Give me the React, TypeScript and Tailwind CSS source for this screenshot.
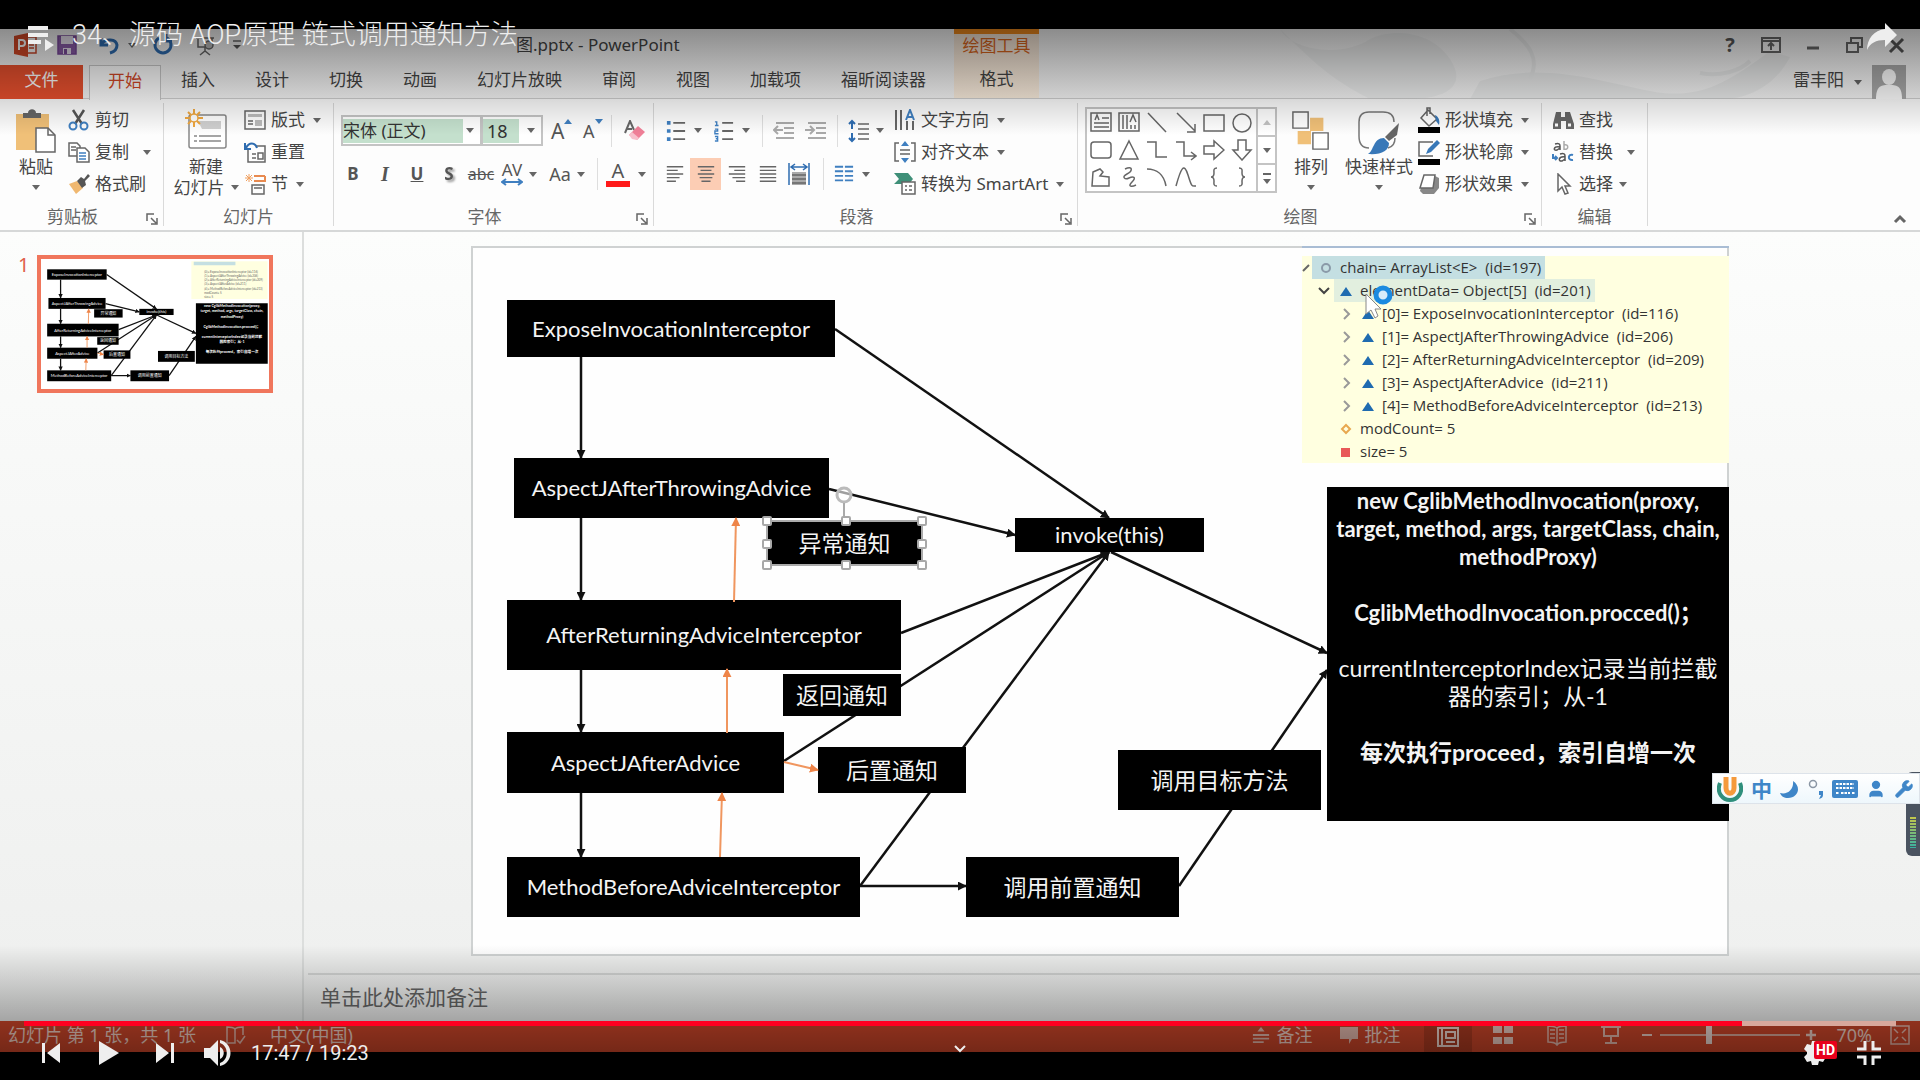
import type { ReactNode } from "react";
import { Wrench, User } from "lucide-react";

/* ── Small helpers ─────────────────────────────────────────── */

function Caret({ className = "" }: { className?: string }) {
  return (
    <svg viewBox="0 0 8 5" className={`h-[5px] w-2 shrink-0 ${className}`} aria-hidden>
      <path d="M0 0h8L4 5z" fill="#666" />
    </svg>
  );
}

function Icon({ children, box = "0 0 22 22", className = "h-[22px] w-[22px]" }: { children: ReactNode; box?: string; className?: string }) {
  return (
    <svg viewBox={box} className={`shrink-0 ${className}`} fill="none" stroke="#666" strokeWidth="1.5" aria-hidden>
      {children}
    </svg>
  );
}

/* ── Title bar and tabs ────────────────────────────────────── */

const TABS = ["插入", "设计", "切换", "动画", "幻灯片放映", "审阅", "视图", "加载项", "福昕阅读器"];

function QuickAccess() {
  return (
    <div className="flex h-9 items-center pl-3.5 pb-1">
      <Icon box="0 0 24 24" className="h-6 w-6">
        <path d="M13 4h9v16h-9" fill="#fff" stroke="#c8452a" />
        <path d="M15 9h5M15 12h5M15 15h5" stroke="#c8452a" />
        <path d="M0 3l14-3v24L0 21z" fill="#d24726" stroke="none" />
        <path d="M5 17V7h3a3 3 0 010 6H5" stroke="#fff" strokeWidth="2" />
      </Icon>
      <button aria-label="保存" className="ml-[18px]">
        <Icon>
          <path d="M2 2h18v18H2z" fill="#8a5ba8" stroke="#7a4a9a" />
          <path d="M5 2h12v8H5zM7 14h8v6H7z" fill="#e8e0ee" stroke="none" />
          <path d="M8 15h3v5H8z" fill="#7a4a9a" stroke="none" />
        </Icon>
      </button>
      <button aria-label="撤消" className="ml-5 flex items-center gap-2">
        <Icon>
          <path d="M3 4v7h7M3 10c5-6 15-5 16 1 0 4-3 7-7 8" stroke="#2e6cb0" strokeWidth="3" />
        </Icon>
        <Caret />
      </button>
      <button aria-label="重复" className="ml-4">
        <Icon>
          <path d="M15 4a8 8 0 11-8 0M14 0v7h6" stroke="#2e6cb0" strokeWidth="3" />
        </Icon>
      </button>
      <button aria-label="从头开始" className="ml-5">
        <Icon>
          <path d="M2 4h18M4 4v9h14V4M11 13v4M6 21l5-4 5 4" />
          <circle cx="15" cy="11" r="4" fill="#bbb" />
        </Icon>
      </button>
      <button aria-label="自定义快速访问工具栏" className="ml-4">
        <Icon box="0 0 10 10" className="h-2.5 w-2.5">
          <path d="M1 1h8" />
          <path d="M1 5h8L5 9z" fill="#555" stroke="none" />
        </Icon>
      </button>
      <h1 className="ml-[274px] text-[17px] leading-6 text-[#444]">图.pptx - PowerPoint</h1>
    </div>
  );
}

function WindowButtons() {
  return (
    <div className="flex h-9 items-center justify-end gap-5 pb-1 pr-3">
      <button aria-label="帮助" className="w-5 text-xl font-bold text-[#555]">?</button>
      <button aria-label="功能区显示选项">
        <Icon>
          <path d="M2 4h18v14H2zM2 7h18M11 16V9M8 12l3-3 3 3" strokeWidth="2" />
        </Icon>
      </button>
      <button aria-label="最小化">
        <Icon>
          <path d="M5 14h12" strokeWidth="3" />
        </Icon>
      </button>
      <button aria-label="还原">
        <Icon>
          <path d="M3 9h11v9H3zM7 9V4h11v9h-4" strokeWidth="2" />
        </Icon>
      </button>
      <button aria-label="关闭">
        <Icon>
          <path d="M4 5l13 13M17 5L4 18" stroke="#555" strokeWidth="3" />
        </Icon>
      </button>
    </div>
  );
}

function Header() {
  return (
    <header className="relative flex h-[70px] shrink-0 border-b border-[#d0d0d0] bg-[#f6f6f6]">
      <svg viewBox="0 0 700 70" className="absolute right-0 top-0 h-[70px] w-[700px] opacity-15" aria-hidden>
        <path d="M60 0c10 20 60 30 90 10 20-10 60-10 80 20s-10 40-40 40H150C110 50 90 30 60 0z" fill="#c0c6c6" />
        <path d="M260 52c60-20 120 0 170 10s80-10 120-40l20 6c-10 20-30 38-60 42H250z" fill="#b8bebe" />
        <path d="M290 0c20 16 30 30 20 50M480 44c20 4 40-2 50-12" fill="none" stroke="#b0b6b6" strokeWidth="4" />
      </svg>
      <div className="relative w-[954px] shrink-0">
        <QuickAccess />
        <nav className="flex h-[34px] items-stretch whitespace-nowrap text-[17px] leading-[30px] text-[#444]">
          <button className="mr-1.5 w-[83px] bg-[#e8502e] pb-1 text-white">文件</button>
          <button className="-mb-px w-[72px] border border-b-0 border-[#c8c8c8] bg-[#fdfdfd] pb-1 text-[#d24726]">开始</button>
          {TABS.map((t) => (
            <button key={t} className="px-5 pb-1">
              {t}
            </button>
          ))}
        </nav>
      </div>
      <div className="relative flex w-[85px] shrink-0 flex-col items-center border-t-5 border-[#f08a1c] bg-gradient-to-b from-[#f6e6d6] to-[#fbeede] text-[17px]">
        <span className="h-[31px] leading-6 text-[#d8651c]">绘图工具</span>
        <button className="flex-1 pb-1 leading-[30px] text-[#444]">格式</button>
      </div>
      <div className="relative flex-1">
        <WindowButtons />
        <div className="flex h-[34px] items-center justify-end gap-2.5 pr-3.5 text-[17px] leading-[30px] text-[#444]">
          <span className="pb-1">雷丰阳</span>
          <Caret />
          <Icon box="0 0 34 34" className="h-[34px] w-[34px]">
            <path d="M0 0h34v34H0z" fill="#a8a8a8" stroke="none" />
            <ellipse cx="17" cy="12" rx="7" ry="8" fill="#fff" stroke="none" />
            <path d="M4 34c0-14 6-14 13-14s13 0 13 14z" fill="#fff" stroke="none" />
          </Icon>
        </div>
      </div>
    </header>
  );
}

/* ── Ribbon ────────────────────────────────────────────────── */

function Group({ label, launcher, width, children }: { label: string; launcher?: boolean; width: string; children: ReactNode }) {
  return (
    <section className={`my-1 flex shrink-0 flex-col border-r border-[#dadada] pt-px ${width}`}>
      <div className="flex h-24">{children}</div>
      <div className="flex flex-1 items-center pt-2 text-[17px] leading-4 text-[#666]">
        <span className="flex-1 text-center">{label}</span>
        {launcher && (
          <button aria-label={`${label}设置`} className="mr-1 pt-1">
            <Icon box="0 0 14 14" className="h-3.5 w-3.5">
              <path d="M2 9V2h7M6 6l5 5M12 6v6H6" />
            </Icon>
          </button>
        )}
      </div>
    </section>
  );
}

function TallButton({ icon, top, bottom, width }: { icon: ReactNode; top: string; bottom?: string; width: string }) {
  return (
    <button className={`flex shrink-0 flex-col items-center text-[17px] leading-[21px] text-[#444] ${width}`}>
      <span className="flex h-[52px] items-start pt-1">{icon}</span>
      <span className="whitespace-nowrap">{top}</span>
      <span className="flex h-[21px] items-center gap-1.5 whitespace-nowrap">
        {bottom}
        <Caret />
      </span>
    </button>
  );
}

function RowButton({ icon, label, caret, gap = "gap-2" }: { icon: ReactNode; label: string; caret?: boolean; gap?: string }) {
  return (
    <button className={`flex h-8 items-center whitespace-nowrap text-[17px] text-[#444] ${gap}`}>
      <span className="flex items-center gap-[5px]">
        {icon}
        {label}
      </span>
      {caret && <Caret />}
    </button>
  );
}

function Sep() {
  return <span className="h-8 w-px shrink-0 bg-[#dedede]" />;
}

function ClipboardGroup() {
  return (
    <Group label="剪贴板" launcher width="w-[164px]">
      <TallButton
        width="ml-1 w-16"
        top="粘贴"
        icon={
          <Icon box="0 0 42 46" className="h-[46px] w-[42px]">
            <path d="M1 6h33v36H1z" fill="#f0c078" stroke="none" />
            <path d="M8 10V5h5c0-5 8-5 8 0h5v5z" fill="#666" stroke="none" />
            <path d="M21 20h12l7 7v17H21z" fill="#fff" />
            <path d="M33 20v7h7" />
          </Icon>
        }
      />
      <div className="flex flex-col">
        <RowButton
          label="剪切"
          icon={
            <Icon>
              <path d="M5 1l9 14M16 1L7 15" stroke="#555" strokeWidth="2.5" />
              <circle cx="5" cy="17" r="3.5" stroke="#3f7fc0" strokeWidth="2" />
              <circle cx="16" cy="17" r="3.5" stroke="#3f7fc0" strokeWidth="2" />
            </Icon>
          }
        />
        <RowButton
          label="复制"
          caret
          gap="gap-3.5"
          icon={
            <Icon>
              <path d="M1 2h8l3 3v10H1zM3 6h5M3 9h5" />
              <path d="M9 7h8l4 4v10H9z" fill="#fff" />
              <path d="M11 12h7M11 15h7M11 18h7" stroke="#3f7fc0" />
            </Icon>
          }
        />
        <RowButton
          label="格式刷"
          icon={
            <Icon>
              <path d="M1 11l8-3 6 7-7 6z" fill="#f0b870" stroke="none" />
              <path d="M9 8l4-4 3 2 4-5 2 2-5 5 1 4-4 3z" fill="#555" stroke="none" />
            </Icon>
          }
        />
      </div>
    </Group>
  );
}

function SlidesGroup() {
  return (
    <Group label="幻灯片" width="w-[170px]">
      <TallButton
        width="ml-1 w-[76px]"
        top="新建"
        bottom="幻灯片"
        icon={
          <Icon box="0 0 44 44" className="h-11 w-11">
            <rect x="5" y="7" width="37" height="33" rx="2" fill="#fff" stroke="#888" />
            <path d="M14 13h23v8H18z" fill="#d0d0d0" stroke="none" />
            <path d="M10 28h27M10 33h27" stroke="#888" strokeDasharray="3 2 30" />
            <path d="M10 1v18M1 10h18M4 4l12 12M16 4L4 16" stroke="#f0a840" strokeWidth="2" />
            <circle cx="10" cy="10" r="4" fill="#fff" stroke="#f0a840" />
          </Icon>
        }
      />
      <div className="flex flex-col">
        <RowButton
          label="版式"
          caret
          icon={
            <Icon>
              <path d="M1 2h20v18H1z" />
              <path d="M4 5h14v3H4zM11 11h7v6h-7z" fill="#bbb" stroke="none" />
              <path d="M4 12h5M4 15h5" />
            </Icon>
          }
        />
        <RowButton
          label="重置"
          icon={
            <Icon>
              <path d="M4 8v13h17V5H12M8 13h4M8 17h4M14 12h5v6h-5z" />
              <path d="M1 2v6h6M2 7c3-6 9-6 11 0" stroke="#2e6cb0" strokeWidth="2" />
            </Icon>
          }
        />
        <RowButton
          label="节"
          caret
          icon={
            <Icon>
              <path d="M5 1v8M1 5h8M2 2l6 6M8 2L2 8" stroke="#f0a060" strokeWidth="1" />
              <path d="M10 3h11M10 8h11v-5" stroke="#e88a50" strokeWidth="2" />
              <path d="M8 12h12v9H8zM10 15h8" />
            </Icon>
          }
        />
      </div>
    </Group>
  );
}

function FontGroup() {
  return (
    <Group label="字体" launcher width="w-[320px]">
      <div className="flex flex-col gap-3 pl-[7px] pt-[11px] text-[#555]">
        <div className="flex h-[31px] items-center">
          <div className="flex h-[31px] w-[141px] items-center border-2 border-[#c4c4c4] bg-white pr-1.5">
            <select aria-label="字体" className="h-6 w-[120px] appearance-none bg-[#c4e0cd] text-[17px] leading-6 text-[#333]">
              <option>宋体 (正文)</option>
            </select>
            <Caret className="ml-auto" />
          </div>
          <div className="-ml-px flex h-[31px] w-[62px] items-center border-2 border-[#c4c4c4] bg-white pr-1.5">
            <select aria-label="字号" className="h-6 w-9 appearance-none bg-[#c4e0cd] pl-1 text-lg leading-6 text-[#333]">
              <option>18</option>
            </select>
            <Caret className="ml-auto" />
          </div>
          <button aria-label="增大字号" className="ml-2 flex w-8 items-start text-[21px] leading-6">
            A
            <Icon box="0 0 8 5" className="h-[5px] w-2">
              <path d="M0 5h8L4 0z" fill="#3f7fc0" stroke="none" />
            </Icon>
          </button>
          <button aria-label="减小字号" className="flex w-7 items-start text-lg leading-6">
            A
            <Icon box="0 0 8 5" className="h-[5px] w-2">
              <path d="M0 0h8L4 5z" fill="#3f7fc0" stroke="none" />
            </Icon>
          </button>
          <Sep />
          <button aria-label="清除所有格式" className="ml-3">
            <Icon>
              <path d="M1 13L6 1l4 9M3 9h5" strokeWidth="2" />
              <path d="M5 15l9-9 7 6-8 8z" fill="#f08098" stroke="none" />
              <path d="M5 15l3-3 7 6-2 2-5-1z" fill="#f8c0cc" stroke="none" />
            </Icon>
          </button>
        </div>
        <div className="-ml-1 flex h-8 items-center text-[17px]">
          <button className="w-8 font-bold">B</button>
          <button className="w-8 font-['Liberation_Serif',serif] text-xl font-bold italic">I</button>
          <button className="w-8 font-bold underline">U</button>
          <button className="w-8 font-bold drop-shadow-[2px_2px_1px_rgba(0,0,0,0.4)]">S</button>
          <button className="w-8 text-base line-through">abc</button>
          <button aria-label="字符间距" className="flex w-11 items-center justify-center gap-1.5">
            <span className="flex flex-col items-center leading-4">
              AV
              <Icon box="0 0 22 8" className="h-2 w-[22px]">
                <path d="M1 4h20M5 1L1 4l4 3M17 1l4 3-4 3" stroke="#3f7fc0" strokeWidth="2" />
              </Icon>
            </span>
            <Caret />
          </button>
          <button className="ml-1 flex w-11 items-center justify-center gap-1.5 text-lg">
            Aa
            <Caret />
          </button>
          <span className="ml-2 h-8 w-px bg-[#dedede]" />
          <button aria-label="字体颜色" className="ml-2 flex items-center gap-2">
            <span className="w-6 border-b-6 border-[#ff1a1a] text-center text-xl leading-5">A</span>
            <Caret />
          </button>
        </div>
      </div>
    </Group>
  );
}

const ALIGNS = [
  { label: "左对齐", d: "M1 3h18M1 7h12M1 11h18M1 15h14M1 19h10", active: false },
  { label: "居中", d: "M1 3h18M4 7h12M1 11h18M3 15h14M5 19h10", active: true },
  { label: "右对齐", d: "M1 3h18M7 7h12M1 11h18M5 15h14M9 19h10", active: false },
  { label: "两端对齐", d: "M1 3h18M1 7h18M1 11h18M1 15h18M1 19h18", active: false },
];

function ParagraphGroup() {
  return (
    <Group label="段落" launcher width="w-[424px]">
      <div className="flex w-[240px] flex-col gap-3 pt-[11px]">
        <div className="flex h-[31px] items-center pl-3">
          <button aria-label="项目符号" className="flex w-12 items-center gap-2">
            <Icon className="h-[26px] w-5">
              <path d="M8 2h13M8 11h13M8 20h13" strokeWidth="2" />
              <path d="M1 0h4v4H1zM1 9h4v4H1zM1 18h4v4H1z" fill="#3f7fc0" stroke="none" />
            </Icon>
            <Caret />
          </button>
          <button aria-label="编号" className="flex w-12 items-center gap-2">
            <Icon className="h-[26px] w-5">
              <path d="M9 2h12M9 11h12M9 20h12" strokeWidth="2" />
              <path d="M1 1h2v4M1 5h4M1 9h3v2H1v3h4M1 17h3v5H1M2 19.500h2" stroke="#3f7fc0" />
            </Icon>
            <Caret />
          </button>
          <Sep />
          <button aria-label="减少缩进量" className="ml-2.5 w-8">
            <Icon>
              <path d="M3 3h18M11 8h10M11 13h10M3 18h18M10 10H1M5 6l-4 4 4 4" stroke="#aaa" strokeWidth="2" />
            </Icon>
          </button>
          <button aria-label="增加缩进量" className="w-8">
            <Icon>
              <path d="M3 3h18M11 8h10M11 13h10M3 18h18M0 10h9M5 6l4 4-4 4" stroke="#aaa" strokeWidth="2" />
            </Icon>
          </button>
          <Sep />
          <button aria-label="行距" className="ml-2.5 flex items-center gap-1.5">
            <Icon className="h-7 w-[22px]">
              <path d="M10 4h11M10 9h11M10 14h11M10 19h11" />
              <path d="M4 1v8M1 4l3-3 3 3M4 13v8M1 18l3 3 3-3" stroke="#2e6cb0" strokeWidth="2" />
            </Icon>
            <Caret />
          </button>
        </div>
        <div className="flex h-8 items-center pl-[5px]">
          {ALIGNS.map((a) => (
            <button key={a.label} aria-label={a.label} className={`flex h-8 w-[31px] items-center justify-center ${a.active ? "bg-[#fccdb4]" : ""}`}>
              <Icon box="0 0 20 22" className="h-5 w-5">
                <path d={a.d} />
              </Icon>
            </button>
          ))}
          <button aria-label="分散对齐" className="mr-2 flex w-8 justify-center">
            <Icon>
              <path d="M1 0v22M21 0v22M3 4h16M7 1L3 4l4 3M15 1l4 3-4 3" stroke="#2e6cb0" />
              <path d="M4 9h14v13H4z" fill="#aaa" stroke="none" />
              <path d="M4 12h14M4 16h14M4 20h14" />
            </Icon>
          </button>
          <Sep />
          <button aria-label="分栏" className="ml-2.5 flex items-center gap-2">
            <Icon className="h-[22px] w-5">
              <path d="M1 3h9M1 8h9M1 13h9M1 18h9M12 3h9M12 8h9M12 13h9M12 18h9" stroke="#3f7fc0" strokeWidth="2" />
            </Icon>
            <Caret />
          </button>
        </div>
      </div>
      <div className="flex flex-col">
        <RowButton
          label="文字方向"
          caret
          icon={
            <Icon>
              <path d="M2 1v20M7 1v20M13 12v9M19 12v9" strokeWidth="2" />
              <path d="M12 11l4-10 4 10M13 8h6" stroke="#3f7fc0" strokeWidth="2" />
            </Icon>
          }
        />
        <RowButton
          label="对齐文本"
          caret
          icon={
            <Icon>
              <path d="M5 2H1v18h4M17 2h4v18h-4M6 9h10M6 13h10" />
              <path d="M11 0l4 5H7zM11 22l4-5H7z" fill="#3f7fc0" stroke="none" />
            </Icon>
          }
        />
        <RowButton
          label="转换为 SmartArt"
          caret
          icon={
            <Icon>
              <path d="M0 0h14l5 6-4 5H0l5-5z" fill="#3f8f78" stroke="none" />
              <path d="M8 9h13v12H8z" fill="#fff" />
              <path d="M11 13h2M11 17h2M15 13h3M15 17h3" />
            </Icon>
          }
        />
      </div>
    </Group>
  );
}

const SHAPES = [
  "M1 1h20v18H1zM5 8l2-5 2 5M12 6h7M4 11h15M4 15h15",
  "M1 1h20v18H1zM5 3v14M9 3v14M12 10l3-7 3 7M13 13v4M17 13v4",
  "M2 1l18 19",
  "M2 1l18 18M20 12v8h-8",
  "M1 3h20v16H1z",
  "M11 2a9 9 0 110 18 9 9 0 010-18z",
  "M4 3h14a3 3 0 013 3v10a3 3 0 01-3 3H4a3 3 0 01-3-3V6a3 3 0 013-3z",
  "M11 2l9 18H2z",
  "M1 3h9v15h11",
  "M1 3h8v14h11M16 13l5 4-5 4",
  "M1 7h10V2l10 9-10 9v-5H1z",
  "M7 1h8v10h5l-9 10-9-10h5z",
  "M3 6l7-3 3 3-3 4 9 1v9H2z",
  "M7 3c8-4 8 2 2 5s-2 6 2 4 8-1 3 4 0 5 4 3",
  "M1 3c10 0 17 6 19 17",
  "M1 20C6 2 9-4 13 9s4 11 8 11",
  "M14 2c-4 0-3 3-3 5s-1 4-3 4c2 0 3 2 3 4s-1 5 3 5",
  "M8 2c4 0 3 3 3 5s1 4 3 4c-2 0-3 2-3 4s1 5-3 5",
];

function DrawingGroup() {
  return (
    <Group label="绘图" launcher width="w-[464px]">
      <div className="ml-[7px] mt-[3px] flex h-[86px] w-[192px] shrink-0 border-2 border-[#c4c4c4] bg-white">
        <div className="grid flex-1 grid-cols-6">
          {SHAPES.map((d) => (
            <button key={d} aria-label="形状" className="flex items-center justify-center">
              <Icon className="h-[22px] w-[22px]">
                <path d={d} />
              </Icon>
            </button>
          ))}
        </div>
        <div className="flex w-[19px] flex-col divide-y-2 divide-[#c4c4c4] border-l-2 border-[#c4c4c4]">
          <button aria-label="上一行" className="flex flex-1 items-center justify-center">
            <Caret className="rotate-180 opacity-40" />
          </button>
          <button aria-label="下一行" className="flex flex-1 items-center justify-center">
            <Caret />
          </button>
          <button aria-label="其他" className="flex flex-1 flex-col items-center justify-center gap-1">
            <span className="h-0.5 w-2 bg-[#666]" />
            <Caret />
          </button>
        </div>
      </div>
      <TallButton
        width="ml-1 w-[60px]"
        top="排列"
        icon={
          <Icon box="0 0 42 44" className="mt-0.5 h-[42px] w-10">
            <path d="M20 8h14v14H20zM7 22h14v14H7z" fill="#f0c078" stroke="none" />
            <path d="M2 2h16v17H2zM23 24h16v17H23z" fill="#fff" />
          </Icon>
        }
      />
      <TallButton
        width="w-[76px]"
        top="快速样式"
        icon={
          <Icon box="0 0 44 46" className="mt-0.5 h-[46px] w-11">
            <path d="M12 38C4 38 2 32 2 26V12C2 5 6 2 12 2h14c8 0 11 4 11 10" fill="none" stroke="#777" />
            <path d="M38 28c0 6-3 9-7 10" stroke="#777" />
            <path d="M42 13l-2 12-8 6-4-4z" fill="#666" stroke="none" />
            <path d="M27 28l5 5c0 8-8 12-21 11 6-3 5-16 16-16z" fill="#3878b8" stroke="none" />
          </Icon>
        }
      />
      <div className="flex flex-col pl-px">
        <RowButton
          label="形状填充"
          caret
          icon={
            <Icon box="0 0 22 26" className="h-[26px] w-[22px]">
              <path d="M10 3l9 9-8 7-8-8zM9 9V1h3v6" fill="#fff" />
              <path d="M17 8c4 2 5 6 4 10l-3-4z" fill="#3878b8" stroke="none" />
              <path d="M0 20h22v6H0z" fill="#000" stroke="none" />
            </Icon>
          }
        />
        <RowButton
          label="形状轮廓"
          caret
          icon={
            <Icon box="0 0 22 26" className="h-[26px] w-[22px]">
              <path d="M15 3H1v14h14" />
              <path d="M8 15l2-5 9-9 3 3-9 9z" fill="#3878b8" stroke="none" />
              <path d="M0 20h22v6H0z" fill="#000" stroke="none" />
            </Icon>
          }
        />
        <RowButton
          label="形状效果"
          caret
          icon={
            <Icon>
              <path d="M6 3h11l4 2v10l-5 6H5l-3-3z" fill="#888" stroke="none" />
              <path d="M6 2h11l-2 13H2z" fill="#fff" />
            </Icon>
          }
        />
      </div>
    </Group>
  );
}

function EditingGroup() {
  return (
    <Group label="编辑" width="w-[106px]">
      <div className="flex flex-col pl-2.5">
        <RowButton
          label="查找"
          icon={
            <Icon>
              <path d="M4 3h5v5h4V3h5l4 12v5h-8v-8H9v8H1v-5z" fill="#666" stroke="none" />
              <path d="M3 16h3M16 16h3" stroke="#fff" strokeWidth="3" />
            </Icon>
          }
        />
        <RowButton
          label="替换"
          caret
          gap="gap-3.5"
          icon={
            <Icon>
              <path d="M3 3c4-1 5 0 5 2v4M8 6c-7-1-7 4-3 3l3-2" stroke="#555" />
              <path d="M12 0v9M12 4c5-2 5 6 0 4" stroke="#aaa" />
              <path d="M8 13c4-1 5 0 5 2v5M13 16c-7-1-7 5-3 4l3-2" stroke="#555" />
              <path d="M21 14c-5-2-6 6 0 5M1 13v4h4M3 15l2 2-2 2" stroke="#3f7fc0" strokeWidth="2" />
            </Icon>
          }
        />
        <RowButton
          label="选择"
          caret
          gap="gap-1.5"
          icon={
            <Icon>
              <path d="M6 1v17l4-4 3 7 3-1-3-7h5z" fill="#fff" />
            </Icon>
          }
        />
      </div>
    </Group>
  );
}

function Ribbon() {
  return (
    <div className="flex h-[133px] shrink-0 border-b-2 border-[#d6d8d8] bg-[#fdfdfd]">
      <ClipboardGroup />
      <SlidesGroup />
      <FontGroup />
      <ParagraphGroup />
      <DrawingGroup />
      <EditingGroup />
      <button aria-label="折叠功能区" className="mb-1 ml-auto mr-3 self-end">
        <Icon box="0 0 16 14" className="h-3.5 w-4">
          <path d="M3 10l5-5 5 5" strokeWidth="3" />
        </Icon>
      </button>
    </div>
  );
}

/* ── Slide ─────────────────────────────────────────────────── */

// shapes on the slide, in slide pixels
const NODES = [
  { text: "ExposeInvocationInterceptor", x: 34, y: 52, w: 328, h: 57 },
  { text: "AspectJAfterThrowingAdvice", x: 41, y: 210, w: 315, h: 60 },
  { text: "AfterReturningAdviceInterceptor", x: 34, y: 352, w: 394, h: 70 },
  { text: "AspectJAfterAdvice", x: 34, y: 484, w: 277, h: 61 },
  { text: "MethodBeforeAdviceInterceptor", x: 34, y: 609, w: 353, h: 60 },
  { text: "invoke(this)", x: 542, y: 270, w: 189, h: 34 },
  { text: "异常通知", cjk: true, x: 293, y: 272, w: 157, h: 46 },
  { text: "返回通知", cjk: true, x: 310, y: 426, w: 118, h: 42 },
  { text: "后置通知", cjk: true, x: 345, y: 499, w: 148, h: 46 },
  { text: "调用目标方法", cjk: true, x: 645, y: 502, w: 203, h: 60 },
  { text: "调用前置通知", cjk: true, x: 493, y: 609, w: 213, h: 60 },
];

const LINES = [
  [108, 109, 108, 210],
  [108, 270, 108, 352],
  [108, 422, 108, 484],
  [108, 545, 108, 609],
  [362, 81, 636, 270],
  [356, 241, 542, 287],
  [428, 385, 636, 304],
  [311, 513, 636, 304],
  [387, 638, 636, 304],
  [387, 638, 493, 638],
  [638, 304, 854, 405],
  [706, 638, 854, 422],
];

const RETURNS = [
  [261, 354, 263, 270],
  [254, 485, 254, 421],
  [247, 609, 249, 545],
  [311, 514, 345, 522],
];

const NOTE = [
  { text: "new CglibMethodInvocation(proxy,", style: "text-[22px] font-bold" },
  { text: "target, method, args, targetClass, chain,", style: "text-[22px] font-bold" },
  { text: "methodProxy)", style: "text-[22px] font-bold" },
  { text: "", style: "" },
  { text: "CglibMethodInvocation.procced()；", style: "text-[22px] font-bold" },
  { text: "", style: "" },
  { text: "currentInterceptorIndex记录当前拦截", style: "text-[23px]" },
  { text: "器的索引；从-1", style: "text-[23px]" },
  { text: "", style: "" },
  { text: "每次执行proceed，索引自增一次", style: "text-[23px] font-bold" },
  { text: "", style: "" },
  { text: "", style: "" },
];

const VARS = [
  { toggle: true, mark: "up", text: "[0]= ExposeInvocationInterceptor  (id=116)" },
  { toggle: true, mark: "up", text: "[1]= AspectJAfterThrowingAdvice  (id=206)" },
  { toggle: true, mark: "up", text: "[2]= AfterReturningAdviceInterceptor  (id=209)" },
  { toggle: true, mark: "up", text: "[3]= AspectJAfterAdvice  (id=211)" },
  { toggle: true, mark: "up", text: "[4]= MethodBeforeAdviceInterceptor  (id=213)" },
  { toggle: false, mark: "diamond", text: "modCount= 5" },
  { toggle: false, mark: "square", text: "size= 5" },
];

function Mark({ kind }: { kind: string }) {
  return (
    <Icon box="0 0 12 12" className="h-3 w-3">
      {kind === "up" && <path d="M6 2l6 9H0z" fill="#1f6bb0" stroke="none" />}
      {kind === "diamond" && <path d="M6 2l4 4-4 4-4-4z" stroke="#e8a850" strokeWidth="2" />}
      {kind === "square" && <path d="M1 2h9v9H1z" fill="#e85858" stroke="none" />}
      {kind === "ring" && <circle cx="6" cy="6" r="4" stroke="#8a9aa8" strokeWidth="2" />}
    </Icon>
  );
}

function Connectors({ id, thickness, head }: { id: string; thickness: number; head: number }) {
  return (
    <>
      <defs>
        <marker id={`${id}-black`} viewBox="0 0 10 10" refX="9" refY="5" markerWidth={head} markerHeight={head} markerUnits="userSpaceOnUse" orient="auto">
          <path d="M0 0l10 5-10 5z" fill="#111" />
        </marker>
        <marker id={`${id}-orange`} viewBox="0 0 10 10" refX="9" refY="5" markerWidth={head} markerHeight={head} markerUnits="userSpaceOnUse" orient="auto">
          <path d="M0 0l10 5-10 5z" fill="#ee8448" />
        </marker>
      </defs>
      {LINES.map(([x1, y1, x2, y2]) => (
        <line key={`${x1}-${y1}-${x2}-${y2}`} x1={x1} y1={y1} x2={x2} y2={y2} stroke="#111" strokeWidth={thickness} markerEnd={`url(#${id}-black)`} />
      ))}
    </>
  );
}

function Returns({ id, thickness }: { id: string; thickness: number }) {
  return (
    <>
      {RETURNS.map(([x1, y1, x2, y2]) => (
        <line key={`${x1}-${y1}`} x1={x1} y1={y1} x2={x2} y2={y2} stroke="#f0965f" strokeWidth={thickness} markerEnd={`url(#${id}-orange)`} />
      ))}
    </>
  );
}

function DebugTree() {
  return (
    <div className="absolute left-[829px] top-2 flex w-[427px] flex-col whitespace-pre bg-[#ffffe0] font-['Open_Sans','Noto_Sans',sans-serif] text-[15px] leading-[23px] text-[#333]">
      <div className="flex items-center">
        <Icon box="0 0 8 10" className="h-2.5 w-2">
          <path d="M1 8l6-6" strokeWidth="2" />
        </Icon>
        <div className="ml-0.5 flex items-center gap-2 bg-[#c4dfe2] pl-2 pr-1">
          <Mark kind="ring" />
          {"chain= ArrayList<E>  (id=197)"}
        </div>
      </div>
      <div className="flex items-center pl-4">
        <Icon box="0 0 12 12" className="h-3 w-3">
          <path d="M1 3l5 5 5-5" stroke="#444" strokeWidth="2" />
        </Icon>
        <div className="ml-1 flex items-center gap-2 bg-[#e2efdf] pl-1.5 pr-1">
          <Mark kind="up" />
          elementData= Object[5]  (id=201)
        </div>
      </div>
      {VARS.map((v) => (
        <div key={v.text} className="flex items-center pl-[38px]">
          {v.toggle && (
            <Icon box="0 0 12 12" className="mr-2.5 h-3 w-3">
              <path d="M4 1l5 5-5 5" stroke="#999" strokeWidth="2" />
            </Icon>
          )}
          <span className="flex items-center gap-2">
            <Mark kind={v.mark} />
            {v.text}
          </span>
        </div>
      ))}
      <svg viewBox="0 0 36 36" className="absolute left-[60px] top-[28px] h-9 w-9" aria-hidden>
        <circle cx="21" cy="11" r="7" fill="#d8ecfa" stroke="#1b8ae0" strokeWidth="5" />
        <path d="M4 10v20l5-4 4 8 3-2-3-7h6z" fill="#fff" stroke="#888" />
      </svg>
    </div>
  );
}

const HANDLES = [
  "-left-1.5 -top-1.5",
  "left-[73px] -top-1.5",
  "-right-1.5 -top-1.5",
  "-left-1.5 top-[17px]",
  "-right-1.5 top-[17px]",
  "-left-1.5 -bottom-1.5",
  "left-[73px] -bottom-1.5",
  "-right-1.5 -bottom-1.5",
];

function Slide() {
  return (
    <div className="relative h-[710px] w-[1258px] shrink-0 border-2 border-[#cfd2d2] bg-[#fefefe] font-['Lato','Noto_Sans_CJK_SC',sans-serif]">
      <div className="absolute -top-0.5 left-[829px] h-0.5 w-[427px] bg-[#a9bdd4]" />
      <svg viewBox="0 0 1257 707" className="absolute left-0 top-0 h-[707px] w-[1257px]" aria-hidden>
        <Connectors id="slide" thickness={2.5} head={9} />
      </svg>
      {NODES.map((n) => (
        <div
          key={n.text}
          className={`absolute flex items-center justify-center whitespace-nowrap bg-black leading-7 text-[#f4f4f4] ${n.cjk ? "text-[23px]" : "text-[22px]"}`}
          style={{ left: n.x, top: n.y, width: n.w, height: n.h }}
        >
          {n.text}
        </div>
      ))}
      <svg viewBox="0 0 1257 707" className="absolute left-0 top-0 h-[707px] w-[1257px]" aria-hidden>
        <Returns id="slide" thickness={2} />
        <circle cx="371" cy="247" r="7" fill="#fff" fillOpacity="0.6" stroke="#bbb" strokeWidth="3" />
        <path d="M371 255v14" stroke="#aaa" strokeWidth="2" />
      </svg>
      <div className="absolute left-[293px] top-[272px] h-[46px] w-[157px] border-2 border-[#aaa]">
        {HANDLES.map((h) => (
          <span key={h} className={`absolute h-2.5 w-2.5 rounded-xs border-2 border-[#a8a8a8] bg-white ${h}`} />
        ))}
      </div>
      <div className="absolute left-[854px] top-[239px] flex h-[334px] w-[402px] flex-col justify-center bg-black text-center leading-7 text-[#f4f4f4]">
        {NOTE.map((l, i) => (
          <p key={i} className={`flex h-7 items-center justify-center whitespace-nowrap leading-7 ${l.style}`}>
            {l.text}
          </p>
        ))}
      </div>
      <DebugTree />
    </div>
  );
}

function Thumbnail() {
  return (
    <svg viewBox="0 0 1257 707" className="h-[130px] w-[228px] bg-white font-['Lato','Noto_Sans_CJK_SC',sans-serif]" aria-hidden>
      <path d="M829 8h420v207H829z" fill="#ffffe0" />
      <path d="M842 10h230v20H842z" fill="#c4dfe2" />
      {VARS.map((v, i) => (
        <text key={v.text} x="900" y={72 + i * 23} fontSize="16" fill="#666">
          {v.text}
        </text>
      ))}
      <Connectors id="thumb" thickness={7} head={24} />
      {NODES.map((n) => (
        <g key={n.text}>
          <rect x={n.x} y={n.y} width={n.w} height={n.h} />
          <text x={n.x + n.w / 2} y={n.y + n.h / 2 + 8} fontSize="22" textAnchor="middle" fill="#fff">
            {n.text}
          </text>
        </g>
      ))}
      <Returns id="thumb" thickness={5} />
      <path d="M854 239h396v334H854z" fill="#000" />
      {NOTE.map((l, i) => (
        <text key={i} x="1053" y={262 + i * 28} fontSize="20" fontWeight="bold" textAnchor="middle" fill="#fff">
          {l.text}
        </text>
      ))}
    </svg>
  );
}

/* ── Input method bar ──────────────────────────────────────── */

function ImeBar() {
  return (
    <div className="absolute right-0 top-[541px] flex h-[31px] w-[208px] items-center gap-2 border border-[#dde3ea] bg-gradient-to-b from-white to-[#eef7fc] pl-1 text-[#3f86c8]">
      <svg viewBox="0 0 26 26" className="h-[26px] w-[26px] shrink-0" fill="none" aria-hidden>
        <path d="M3 7c-4 10 3 17 10 17S27 17 23 7" stroke="#2f8f7c" strokeWidth="4" />
        <path d="M9 1v11c0 7 8 7 8 0V1" stroke="#f59a3c" strokeWidth="5" />
      </svg>
      <span className="w-[21px] text-[21px] font-bold leading-6">中</span>
      <svg viewBox="0 0 20 20" className="h-5 w-5 shrink-0" aria-hidden>
        <path d="M13 2c9 6 5 17-5 17-4 0-7-2-8-5 8 2 14-4 13-12z" fill="currentColor" />
      </svg>
      <svg viewBox="0 0 16 20" className="h-5 w-4 shrink-0" aria-hidden>
        <circle cx="5" cy="5" r="3.500" fill="none" stroke="#8a96a4" strokeWidth="1.500" />
        <path d="M11 12h4v4c0 2-1 3-4 4l2-4h-2z" fill="currentColor" />
      </svg>
      <svg viewBox="0 0 26 18" className="h-[18px] w-[26px] shrink-0" aria-hidden>
        <rect width="26" height="18" rx="2" fill="currentColor" />
        <path d="M4 4h18M4 8h18M4 13h3M9 13h9M20 13h3" stroke="#fff" strokeWidth="2" strokeDasharray="2.500 1" />
      </svg>
      <User className="h-5 w-5 shrink-0 fill-current" strokeWidth={2} />
      <Wrench className="h-5 w-5 shrink-0 fill-current" strokeWidth={1} />
    </div>
  );
}

function Gauge() {
  return (
    <div className="absolute right-0 top-[540px] flex h-[84px] w-3.5 items-end justify-center rounded-l-md bg-[#4a5360] pb-2">
      <span className="h-8 w-1.5 bg-[repeating-linear-gradient(to_bottom,#4a5360_0px,#4a5360_1px,transparent_1px,transparent_3px),linear-gradient(to_bottom,#c8c848,#38b0a0)]" />
    </div>
  );
}

/* ── Status bar ────────────────────────────────────────────── */

function StatusBar() {
  return (
    <footer className="flex h-[31px] shrink-0 items-center whitespace-nowrap bg-[#d0472a] pb-1 pl-2 pr-2.5 text-lg leading-6 text-[#f4d3c8]">
      <span>幻灯片 第 1 张，共 1 张</span>
      <Icon className="ml-7 h-[22px] w-[22px]">
        <path d="M11 4v15H3V3c4 0 6 0 8 2 2-2 4-2 8-2v8M13 16l3 3 5-7" stroke="#e8bcb0" />
      </Icon>
      <span className="ml-6">中文(中国)</span>
      <button className="ml-auto flex items-center gap-1.5">
        <Icon box="0 0 20 20" className="h-5 w-[18px]">
          <path d="M10 1l4 5H6z" fill="#e8bcb0" stroke="none" />
          <path d="M1 10h18M1 14h18M1 18h12" stroke="#e8bcb0" strokeWidth="2" />
        </Icon>
        备注
      </button>
      <button className="ml-7 flex items-center gap-1.5">
        <Icon box="0 0 18 20" className="h-5 w-[18px]">
          <path d="M0 2h18v12h-6l-3 5v-5H0z" fill="#e8bcb0" stroke="none" />
        </Icon>
        批注
      </button>
      <button aria-label="普通视图" className="ml-6 -mb-1 flex h-[31px] w-12 items-center justify-center bg-[#b03c22]">
        <Icon>
          <path d="M1 2h20v18H1zM5 2v18M9 6h9v6H9zM9 16h9" stroke="#f4dcd4" strokeWidth="2" />
        </Icon>
      </button>
      <button aria-label="幻灯片浏览" className="ml-5">
        <Icon>
          <path d="M1 2h9v7H1zM12 2h9v7h-9zM1 13h9v7H1zM12 13h9v7h-9z" fill="#f0cec4" stroke="none" />
        </Icon>
      </button>
      <button aria-label="阅读视图" className="ml-8">
        <Icon>
          <path d="M11 4v17M11 4C8 2 5 2 2 2v16c4 0 7 0 9 3 2-3 5-3 9-3V2c-4 0-7 0-9 2zM4 6h5M4 10h5M4 14h5M13 6h5M13 10h5M13 14h5" stroke="#e8bcb0" />
        </Icon>
      </button>
      <button aria-label="幻灯片放映" className="ml-8">
        <Icon>
          <path d="M1 3h20M4 4v8h14V4M11 12v6M5 19h12" stroke="#e8bcb0" strokeWidth="2" />
        </Icon>
      </button>
      <button aria-label="缩小" className="ml-5 h-0.5 w-2.5 bg-[#f0d0c6]" />
      <div className="ml-2 flex items-center">
        <input
          type="range"
          aria-label="缩放"
          min={0}
          max={100}
          defaultValue={34}
          className="h-0.5 w-[140px] appearance-none bg-[#e0ab9c] [&::-webkit-slider-thumb]:h-[18px] [&::-webkit-slider-thumb]:w-1.5 [&::-webkit-slider-thumb]:appearance-none [&::-webkit-slider-thumb]:bg-[#f0dcd6]"
        />
      </div>
      <button aria-label="放大" className="ml-1.5">
        <Icon box="0 0 10 10" className="h-2.5 w-2.5">
          <path d="M0 5h10M5 0v10" stroke="#f0d0c6" strokeWidth="2.500" />
        </Icon>
      </button>
      <span className="ml-5">70%</span>
      <button aria-label="使幻灯片适应当前窗口" className="ml-[18px]">
        <Icon box="0 0 20 20" className="h-5 w-5">
          <path d="M1 1h18v18H1zM4 4l4 4M16 4l-4 4M4 16l4-4M16 16l-4-4" stroke="#e8bcb0" />
        </Icon>
      </button>
    </footer>
  );
}

/* ── Player chrome ─────────────────────────────────────────── */

function PlayerTitle() {
  return (
    <div className="absolute inset-x-0 top-0 flex h-[74px] items-center pl-7 pr-[22px] text-[#eee]">
      <svg viewBox="0 0 26 26" className="mt-0.5 h-[26px] w-[26px]" fill="currentColor" aria-hidden>
        <path d="M0 1h20v4H0zM0 8h20v4H0zM0 15h13v4H0zM17 14l9 6-9 6z" />
      </svg>
      <h2 className="ml-[18px] whitespace-nowrap pb-1 font-['Roboto','Noto_Sans_CJK_SC',sans-serif] text-[27px] font-light leading-9">
        34、源码 AOP原理 链式调用通知方法
      </h2>
      <button aria-label="分享" className="ml-auto">
        <svg viewBox="0 0 32 28" className="h-7 w-8" fill="currentColor" aria-hidden>
          <path d="M19 0l12 12-12 12v-7C10 17 4 20 1 27 1 16 8 7 19 6z" />
        </svg>
      </button>
    </div>
  );
}

function PlayerControls() {
  return (
    <div className="absolute inset-x-0 bottom-0 px-6 text-[#eee]">
      <input
        type="range"
        aria-label="播放进度"
        defaultValue={92}
        className="block h-[5px] w-full appearance-none bg-[linear-gradient(to_right,#ff0020_91.8%,#d8a89c_91.8%)] [&::-webkit-slider-thumb]:h-0 [&::-webkit-slider-thumb]:w-0 [&::-webkit-slider-thumb]:appearance-none"
      />
      <div className="grid h-[54px] grid-cols-[1fr_auto_1fr] items-center">
        <div className="flex items-center pl-[18px]">
          <button aria-label="上一个">
            <svg viewBox="0 0 18 20" className="h-5 w-[18px]" fill="currentColor" aria-hidden>
              <path d="M0 0h3v20H0zM18 0v20L5 10z" />
            </svg>
          </button>
          <button aria-label="播放" className="ml-[39px]">
            <svg viewBox="0 0 20 24" className="h-6 w-5" fill="currentColor" aria-hidden>
              <path d="M0 0l20 12L0 24z" />
            </svg>
          </button>
          <button aria-label="下一个" className="ml-[37px]">
            <svg viewBox="0 0 18 20" className="h-5 w-[18px]" fill="currentColor" aria-hidden>
              <path d="M15 0h3v20h-3zM0 0v20l13-10z" />
            </svg>
          </button>
          <button aria-label="静音" className="ml-[30px]">
            <svg viewBox="0 0 28 28" className="h-7 w-7" fill="currentColor" aria-hidden>
              <path d="M0 9h6l8-8v26l-8-8H0z" />
              <path d="M16 8c5 2 5 10 0 12zM16 1c14 3 14 23 0 26v-3c9-3 9-17 0-20z" />
            </svg>
          </button>
          <span className="ml-[19px] font-['Roboto',sans-serif] text-xl">17:47 / 19:23</span>
        </div>
        <button aria-label="更多" className="pb-2">
          <svg viewBox="0 0 12 8" className="h-2 w-3" fill="none" stroke="currentColor" strokeWidth="2" aria-hidden>
            <path d="M1 1l5 5 5-5" />
          </svg>
        </button>
        <div className="flex items-center justify-end pr-[15px]">
          <button aria-label="设置" className="relative h-6 w-[34px]">
            <svg viewBox="0 0 24 24" className="h-6 w-6" fill="currentColor" aria-hidden>
              <path d="M9 0h6l1 4 4-1 3 5-3 3v2l3 3-3 5-4-1-1 4H9l-1-4-4 1-3-5 3-3v-2L1 8l3-5 4 1z" />
            </svg>
            <span className="absolute right-0 top-0 rounded-xs bg-[#e8001c] px-0.5 font-['Roboto',sans-serif] text-sm font-bold leading-[18px] text-white">HD</span>
          </button>
          <button aria-label="退出全屏" className="ml-5">
            <svg viewBox="0 0 24 24" className="h-6 w-6" fill="none" stroke="currentColor" strokeWidth="3" aria-hidden>
              <path d="M8 0v8H0M16 0v8h8M8 24v-8H0M16 24v-8h8" />
            </svg>
          </button>
        </div>
      </div>
    </div>
  );
}

/* ── Page ──────────────────────────────────────────────────── */

export default function App() {
  return (
    <div className="relative flex min-h-screen flex-col overflow-hidden bg-black pb-7 pt-[29px] font-['Noto_Sans','Noto_Sans_CJK_SC',sans-serif]">
      <div className="flex flex-1 flex-col">
        <Header />
        <Ribbon />
        <div className="relative flex flex-1 bg-gradient-to-b from-[#fcfdfc] to-[#eeefee]">
          <aside className="flex w-[304px] shrink-0 items-start gap-2 border-r-2 border-[#dcdedd] pl-[18px] pt-[23px]">
            <span className="text-xl leading-5 text-[#e0604a]">1</span>
            <button aria-label="幻灯片 1" className="border-4 border-[#f0765c]">
              <Thumbnail />
            </button>
          </aside>
          <main className="flex min-w-0 flex-1 flex-col">
            <div className="flex flex-1 justify-center pr-6 pt-3.5">
              <Slide />
            </div>
            <p className="ml-1 h-12 border-t-2 border-[#d4d6d5] pl-3 pt-2 text-[21px] leading-7 text-[#666]">单击此处添加备注</p>
          </main>
          <Gauge />
          <ImeBar />
        </div>
        <StatusBar />
      </div>
      <div className="pointer-events-none absolute inset-x-0 top-0 h-[135px] bg-gradient-to-b from-black/55 to-transparent" />
      <div className="pointer-events-none absolute inset-x-0 bottom-0 h-[135px] bg-gradient-to-t from-black/55 to-transparent" />
      <PlayerTitle />
      <PlayerControls />
    </div>
  );
}
